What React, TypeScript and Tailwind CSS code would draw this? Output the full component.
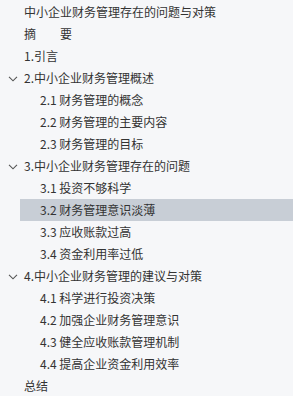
import React from 'react';

type Item = { title: string; children?: string[] };

const toc: Item[] = [
  { title: '中小企业财务管理存在的问题与对策' },
  { title: '摘　　要' },
  { title: '1.引言' },
  {
    title: '2.中小企业财务管理概述',
    children: ['2.1 财务管理的概念', '2.2 财务管理的主要内容', '2.3 财务管理的目标'],
  },
  {
    title: '3.中小企业财务管理存在的问题',
    children: ['3.1 投资不够科学', '3.2 财务管理意识淡薄', '3.3 应收账款过高', '3.4 资金利用率过低'],
  },
  {
    title: '4.中小企业财务管理的建议与对策',
    children: ['4.1 科学进行投资决策', '4.2 加强企业财务管理意识', '4.3 健全应收账款管理机制', '4.4 提高企业资金利用效率'],
  },
  { title: '总结' },
];

const Chevron: React.FC = () => (
  <svg width="10" height="6" viewBox="0 0 10 6" fill="none" className="absolute left-[8px] top-[9px]">
    <path d="M1 0.8 L5 4.8 L9 0.8" stroke="#555" strokeWidth="1.1" />
  </svg>
);

const App: React.FC = () => {
  const active = '3.2 财务管理意识淡薄';

  return (
    <div
      className="w-[293px] h-[396px] overflow-hidden bg-[#f6f7f9] pt-px text-[12px] text-[#333]"
      style={{ fontFamily: '"Noto Sans CJK SC", "Noto Sans", sans-serif' }}
    >
      {toc.map((item) => (
        <div key={item.title}>
          <div className="relative h-[22px] flex items-center pl-[24px] whitespace-pre">
            {item.children && <Chevron />}
            <span>{item.title}</span>
          </div>
          {item.children?.map((c) => (
            <div
              key={c}
              className={
                c === active
                  ? 'h-[22px] ml-[20px] pl-[20px] flex items-center bg-[#c8ced6]'
                  : 'h-[22px] pl-[40px] flex items-center'
              }
            >
              {c}
            </div>
          ))}
        </div>
      ))}
    </div>
  );
};

export default App;
